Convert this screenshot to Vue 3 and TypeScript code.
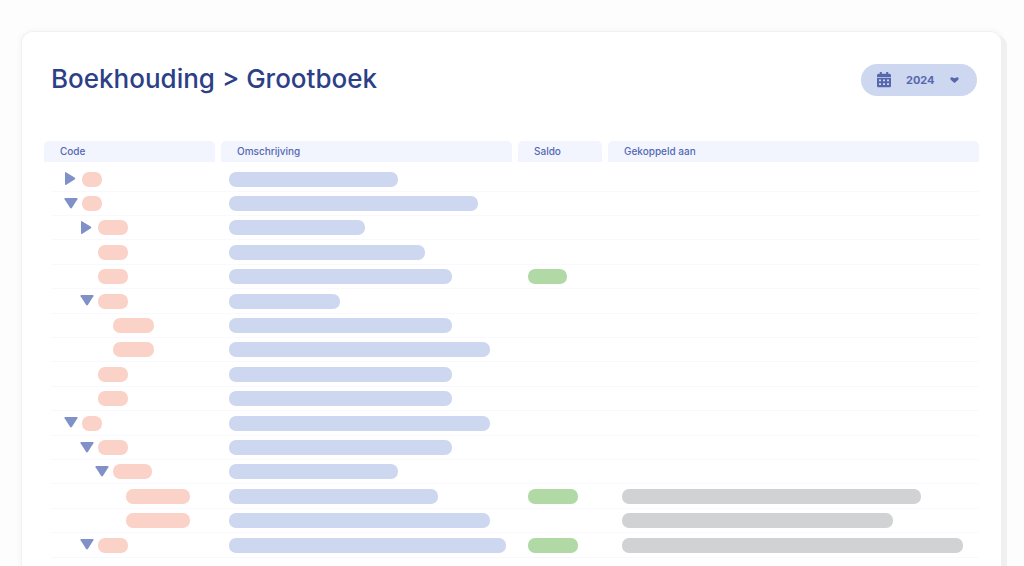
<script setup lang="ts">
import { computed, ref } from 'vue'

interface LedgerRow {
  id: number
  level: number
  toggle?: 'open' | 'closed'
  code: number
  description: number
  balance?: number
  linked?: number
}

const year = ref('2024')

const rows = ref<LedgerRow[]>([
  { id: 1, level: 0, toggle: 'closed', code: 20, description: 169 },
  { id: 2, level: 0, toggle: 'open', code: 20, description: 249 },
  { id: 3, level: 1, toggle: 'closed', code: 30, description: 136 },
  { id: 4, level: 1, code: 30, description: 196 },
  { id: 5, level: 1, code: 30, description: 223, balance: 39 },
  { id: 6, level: 1, toggle: 'open', code: 30, description: 111 },
  { id: 7, level: 2, code: 41, description: 223 },
  { id: 8, level: 2, code: 41, description: 261 },
  { id: 9, level: 1, code: 30, description: 223 },
  { id: 10, level: 1, code: 30, description: 223 },
  { id: 11, level: 0, toggle: 'open', code: 20, description: 261 },
  { id: 12, level: 1, toggle: 'open', code: 30, description: 223 },
  { id: 13, level: 2, toggle: 'open', code: 39, description: 169 },
  { id: 14, level: 3, code: 64, description: 209, balance: 50, linked: 299 },
  { id: 15, level: 3, code: 64, description: 261, linked: 271 },
  { id: 16, level: 1, toggle: 'open', code: 30, description: 277, balance: 50, linked: 341 },
])

const visibleRows = computed(() => {
  let hiddenBelow = Infinity
  return rows.value.filter((row) => {
    if (row.level > hiddenBelow) return false
    hiddenBelow = row.toggle === 'closed' ? row.level : Infinity
    return true
  })
})

function flip(row: LedgerRow) {
  row.toggle = row.toggle === 'open' ? 'closed' : 'open'
}
</script>

<template>
  <div class="page">
    <main class="card">
      <header class="top">
        <h1>Boekhouding &gt; Grootboek</h1>
        <div class="year">
          <svg class="calendar" viewBox="0 0 14 16" aria-hidden="true">
            <path
              fill-rule="evenodd"
              d="M2.800 0h2v1.700h4.400V0h2v1.700h1.300A1.500 1.500 0 0 1 14 3.200V5H0V3.200A1.500 1.500 0 0 1 1.500 1.700h1.300zM0 5.700h14v8.300a1.300 1.300 0 0 1-1.300 1.300H1.300A1.300 1.300 0 0 1 0 14zM2 7.500v1.800h2V7.500zM6 7.500v1.800h2V7.500zM10 7.500v1.800h2V7.500zM2 11.300v1.800h2v-1.800zM6 11.300v1.800h2v-1.800zM10 11.300v1.800h2v-1.800z"
            />
          </svg>
          <select v-model="year" aria-label="Boekjaar">
            <option>2024</option>
            <option>2023</option>
          </select>
          <svg class="caret" viewBox="0 0 9 6" aria-hidden="true">
            <path d="M.3 1.500Q.6.300 2 .300L4.500 1.200 7 .300Q8.400.300 8.700 1.500 8.700 2.300 8 3L4.900 5.700Q4.500 6 4.100 5.700L1 3Q.3 2.300.3 1.500z" />
          </svg>
        </div>
      </header>

      <table>
        <colgroup>
          <col class="col-code" />
          <col class="col-description" />
          <col class="col-balance" />
          <col />
        </colgroup>
        <thead>
          <tr>
            <th scope="col"><div>Code</div></th>
            <th scope="col"><div>Omschrijving</div></th>
            <th scope="col"><div>Saldo</div></th>
            <th scope="col"><div>Gekoppeld aan</div></th>
          </tr>
        </thead>
        <tbody>
          <tr v-for="row in visibleRows" :key="row.id">
            <td>
              <div class="cell code" :class="`level-${row.level}`">
                <span class="slot">
                  <button
                    v-if="row.toggle"
                    type="button"
                    :aria-expanded="row.toggle === 'open'"
                    :aria-label="row.toggle === 'open' ? 'Inklappen' : 'Uitklappen'"
                    @click="flip(row)"
                  >
                    <svg viewBox="0 0 14 14" aria-hidden="true">
                      <path v-if="row.toggle === 'open'" d="M1.200 1h11.600q1.200 0 .6 1.200L8 10.800q-1 1.400-2 0L.6 2.200Q0 1 1.200 1z" />
                      <path v-else d="M1 .9q0-1.300 1.300-.5l8.300 5.100q1.200 1 0 2l-8.300 5.300q-1.300.8-1.300-.5z" />
                    </svg>
                  </button>
                </span>
                <span class="bar pink" :style="{ width: `${row.code}px` }"></span>
              </div>
            </td>
            <td>
              <div class="cell description">
                <span class="bar blue" :style="{ width: `${row.description}px` }"></span>
              </div>
            </td>
            <td>
              <div class="cell balance">
                <span v-if="row.balance" class="bar green" :style="{ width: `${row.balance}px` }"></span>
              </div>
            </td>
            <td>
              <div class="cell linked">
                <span v-if="row.linked" class="bar grey" :style="{ width: `${row.linked}px` }"></span>
              </div>
            </td>
          </tr>
        </tbody>
      </table>
    </main>
  </div>
</template>

<style>
body {
  margin: 0;
  background: #fdfdfd;
}
</style>

<style scoped>
.page {
  box-sizing: border-box;
  display: flex;
  height: 100vh;
  padding: 32px 23px 0 22px;
  overflow: hidden;
  font-family: Inter, 'Liberation Sans', sans-serif;
}

.card {
  flex: 1;
  min-width: 0;
  padding: 0 22px;
  background: #fff;
  border-radius: 11px 11px 0 0;
  box-shadow: 0 0 0 1px #f1f1f1, 6px 3px 1px 0 #f0f0f0, 0 0 5px 2px #f5f5f5;
}

.top {
  display: flex;
  align-items: center;
  justify-content: space-between;
  height: 96px;
  padding: 0 2px 13px 7px;
}

h1 {
  margin: 0;
  padding-bottom: 2px;
  color: #2c3f87;
  font-size: 26px;
  font-weight: 500;
  line-height: 32px;
  white-space: nowrap;
}

.year {
  position: relative;
  display: flex;
  align-items: center;
  width: 116px;
  height: 32px;
  border-radius: 16px;
  background: #cdd7ef;
}

.calendar,
.caret {
  position: absolute;
  fill: #5767ae;
  pointer-events: none;
}

.calendar {
  left: 16px;
  width: 14px;
  height: 16px;
}

.caret {
  right: 18px;
  width: 9px;
  height: 6px;
}

select {
  width: 100%;
  height: 100%;
  padding: 0 30px 0 45px;
  border: 0;
  border-radius: 16px;
  appearance: none;
  background: transparent;
  color: #5767ae;
  font: 700 11px/16px Inter, 'Liberation Sans', sans-serif;
}

table {
  width: 100%;
  table-layout: fixed;
  border-collapse: separate;
  border-spacing: 0;
}

.col-code {
  width: 177px;
}

.col-description {
  width: 297px;
}

.col-balance {
  width: 90px;
}

th {
  padding: 0 6px 5px 0;
  text-align: left;
}

th:last-child {
  padding-right: 0;
}

th div {
  height: 21px;
  padding-left: 16px;
  border-radius: 5px 5px 0 0;
  background: #f2f5fd;
  color: #5368b4;
  font-size: 10px;
  font-weight: 500;
  line-height: 21px;
}

td {
  padding: 0;
}

.cell {
  box-sizing: border-box;
  display: flex;
  align-items: center;
  height: 24px;
  border-bottom: 1px solid #f8f8fe;
}

tr:nth-child(5n + 1) .cell,
tr:nth-child(5n + 4) .cell {
  height: 25px;
}

.code {
  gap: 4px;
  margin-left: 7px;
  padding-left: 13px;
}

.level-1 {
  padding-left: 29px;
}

.level-2 {
  padding-left: 44px;
}

.level-3 {
  padding-left: 57px;
}

.description {
  padding-left: 8px;
}

.balance {
  padding-left: 10px;
}

.linked {
  padding-left: 14px;
}

.slot {
  flex: none;
  width: 14px;
  height: 14px;
}

button {
  display: block;
  width: 14px;
  height: 14px;
  padding: 0;
  border: 0;
  background: none;
  cursor: pointer;
}

button svg {
  display: block;
  width: 14px;
  height: 14px;
  fill: #8090c8;
}

.bar {
  height: 15px;
  border-radius: 7px;
}

.pink {
  background: #fbd2c7;
}

.blue {
  background: #cdd7ef;
}

.green {
  background: #b0d9a5;
}

.grey {
  background: #d1d2d4;
}
</style>
